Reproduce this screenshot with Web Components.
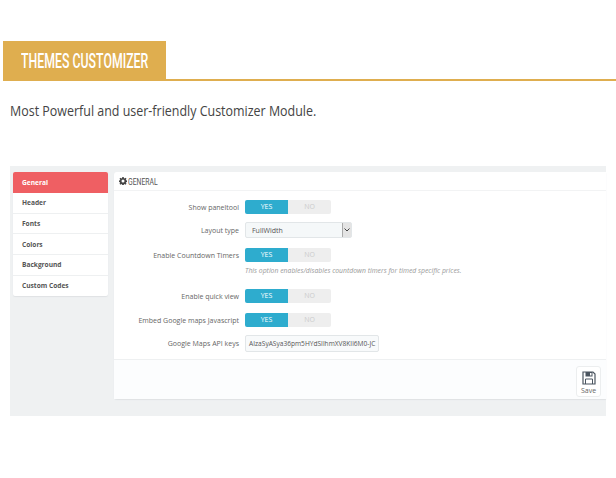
<!DOCTYPE html>
<html>
<head>
<meta charset="utf-8">
<title>Themes Customizer</title>
<style>
  html, body { margin: 0; background: #fff; }
  body { width: 616px; height: 478px; overflow: hidden; font-family: "Open Sans", sans-serif; }
</style>
</head>
<body>
<section-heading>THEMES CUSTOMIZER</section-heading>
<tag-line>Most Powerful and user-friendly Customizer Module.</tag-line>
<admin-panel>
  <side-nav slot="nav"></side-nav>
  <form-row label="Show paneltool"><yes-no></yes-no></form-row>
  <form-row label="Layout type" style="--top:8px"><select-box>FullWidth</select-box></form-row>
  <form-row label="Enable Countdown Timers" style="--top:10px" help="This option enables/disables countdown timers for timed specific prices."><yes-no></yes-no></form-row>
  <form-row label="Enable quick view" style="--top:13px"><yes-no></yes-no></form-row>
  <form-row label="Embed Google maps Javascript" style="--top:10px"><yes-no></yes-no></form-row>
  <form-row label="Google Maps API keys" style="--top:8px"><key-input>AIzaSyASya36pm5HYdSIlhmXV8KIl6M0-JC</key-input></form-row>
</admin-panel>

<script>
customElements.define('section-heading',
  class extends HTMLElement {
    constructor () {
      super()
      this.attachShadow({ mode: 'open' }).innerHTML = `
        <style>
          :host { display: block; margin: 41px 0 0 3px; border-bottom: 2px solid #dfae4f; height: 38px; }
          .tab { width: 163px; height: 40px; background: #dfae4f; display: flex; align-items: center; padding-left: 18px; box-sizing: border-box; }
          span { display: inline-block; color: #fff; font: 500 21px Roboto, sans-serif; white-space: nowrap; transform: scaleX(.587); transform-origin: left center; }
        </style>
        <div class="tab"><span><slot></slot></span></div>`
    }
  }
)

customElements.define('tag-line',
  class extends HTMLElement {
    constructor () {
      super()
      this.attachShadow({ mode: 'open' }).innerHTML = `
        <style>
          :host { display: block; margin: 20px 0 0 10px; height: 20px; color: #444; font: 14px/20px "Open Sans", sans-serif; white-space: nowrap; transform: scaleX(.89); transform-origin: left center; }
        </style>
        <slot></slot>`
    }
  }
)

customElements.define('admin-panel',
  class extends HTMLElement {
    constructor () {
      super()
      this.attachShadow({ mode: 'open' }).innerHTML = `
        <style>
          :host { display: flex; gap: 6px; margin: 45px 0 0 10px; width: 596px; height: 250px; box-sizing: border-box; padding: 6px 0 0 3px; background: #eff1f2; align-items: flex-start; }
          .card { flex: 1; height: 227px; background: #fff; border-radius: 3px 0 0 3px; box-shadow: 0 1px 1px #dfe2e4; display: flex; flex-direction: column; }
          h3 { margin: 0; height: 18px; padding-left: 5px; display: flex; align-items: center; gap: 1px; border-bottom: 1px solid #f2f3f4; color: #555; }
          h3 b { display: inline-block; font: 400 9.500px Roboto, sans-serif; transform: scaleX(.72); transform-origin: left center; }
          svg { display: block; }
          .fields { flex: 1; padding-top: 9px; }
          footer { height: 40px; box-sizing: border-box; border-top: 1px solid #eef0f1; background: #fcfdfe; display: flex; justify-content: flex-end; padding: 6px 5px 2px 0; }
          .save { width: 25px; height: 31px; box-sizing: border-box; background: #fff; border: 1px solid #eceeef; border-radius: 3px; display: flex; flex-direction: column; align-items: center; padding-top: 4px; font: 7px/9px "Open Sans", sans-serif; color: #666; gap: 1px; }
        </style>
        <slot name="nav"></slot>
        <div class="card">
          <h3>
            <svg width="8" height="8" viewBox="0 0 16 16"><path fill="#444" fill-rule="evenodd" d="M6.600 0h2.800l.4 2.200 1.400.6L13 1.500l2 2-1.300 1.800.6 1.400 2.200.4v2.800l-2.200.4-.6 1.400 1.300 1.800-2 2-1.800-1.300-1.400.6-.4 2.200H6.600l-.4-2.200-1.400-.6L3 15.500l-2-2 1.300-1.800-.6-1.400L-.3 9.900V7.100l2.200-.4.6-1.400L1 3.500l2-2 1.800 1.300 1.400-.6zM8 5a3 3 0 1 0 0 6 3 3 0 0 0 0-6z"/></svg>
            <b>GENERAL</b>
          </h3>
          <div class="fields"><slot></slot></div>
          <footer>
            <div class="save">
              <svg width="14" height="14" viewBox="0 0 14 14"><path fill="none" stroke="#4b5560" stroke-width="1.200" d="M1 1h10l2 2v10H1z"/><path fill="#4b5560" d="M3.500 1h7v4.500h-7z"/><path fill="#fff" d="M8 2h1.500v2.500H8z"/><path fill="none" stroke="#4b5560" d="M3.500 13V8h7v5"/></svg>
              Save
            </div>
          </footer>
        </div>`
    }
  }
)

customElements.define('side-nav',
  class extends HTMLElement {
    constructor () {
      super()
      const items = ['General', 'Header', 'Fonts', 'Colors', 'Background', 'Custom Codes']
      this.attachShadow({ mode: 'open' }).innerHTML = `
        <style>
          :host { display: block; width: 95px; height: 124px; background: #fff; border-radius: 2px; box-shadow: 0 1px 1px #dfe2e4; font: 700 6.600px "Open Sans", sans-serif; color: #555; }
          div { height: 20.700px; box-sizing: border-box; padding-left: 9px; display: flex; align-items: center; border-bottom: 1px solid #eef0f1; }
          div:last-child { border-bottom: 0; height: 20px; }
          .on { height: 21px; background: #ef5f63; color: #fff; border-bottom: 0; border-radius: 2px 2px 0 0; }
        </style>
        ${items.map((item, i) => `<div class="${i === 0 ? 'on' : ''}">${item}</div>`).join('')}`
    }
  }
)

customElements.define('form-row',
  class extends HTMLElement {
    constructor () {
      super()
      const help = this.getAttribute('help')
      this.attachShadow({ mode: 'open' }).innerHTML = `
        <style>
          :host { display: grid; grid-template-columns: 125px auto; column-gap: 6px; margin-top: var(--top, 0); align-items: center; font: 7px "Open Sans", sans-serif; color: #666; }
          label { text-align: right; white-space: nowrap; }
          .help { grid-column: 2; margin-top: 3px; height: 11px; line-height: 11px; font-style: italic; font-size: 6.850px; color: #999; white-space: nowrap; }
        </style>
        <label>${this.getAttribute('label')}</label>
        <div><slot></slot></div>
        ${help ? `<div class="help">${help}</div>` : ''}`
    }
  }
)

customElements.define('yes-no',
  class extends HTMLElement {
    constructor () {
      super()
      this.attachShadow({ mode: 'open' }).innerHTML = `
        <style>
          :host { display: flex; width: 86px; height: 14px; border-radius: 2px; overflow: hidden; font: 400 7px/14px "Open Sans", sans-serif; text-align: center; }
          span { flex: 1; }
          .yes { background: #2eacce; color: #fff; }
          .no { background: #eeeeee; color: #ccc; }
        </style>
        <span class="yes">YES</span><span class="no">NO</span>`
    }
  }
)

customElements.define('select-box',
  class extends HTMLElement {
    constructor () {
      super()
      this.attachShadow({ mode: 'open' }).innerHTML = `
        <style>
          :host { display: flex; width: 107px; height: 16px; box-sizing: border-box; align-items: center; background: #f5f8f9; border: 1px solid #e2e6e8; border-radius: 2px; font: 7px "Open Sans", sans-serif; color: #555; }
          .value { flex: 1; padding-left: 6px; }
          .arrow { width: 8px; height: 14px; background: #e4e4e4; border-left: 1px solid #aaa; display: flex; align-items: center; justify-content: center; }
        </style>
        <div class="value"><slot></slot></div>
        <div class="arrow"><svg width="6" height="4" viewBox="0 0 6 4"><path fill="none" stroke="#444" d="M.5.5 3 3 5.500.5"/></svg></div>`
    }
  }
)

customElements.define('key-input',
  class extends HTMLElement {
    constructor () {
      super()
      this.attachShadow({ mode: 'open' }).innerHTML = `
        <style>
          :host { display: block; width: 134px; height: 17px; box-sizing: border-box; overflow: hidden; background: #f8fafb; border: 1px solid #e2e6e8; border-radius: 2px; padding: 0 3px; font: 6.600px/15px "Open Sans", sans-serif; color: #555; white-space: nowrap; }
        </style>
        <slot></slot>`
    }
  }
)
</script>
</body>
</html>
